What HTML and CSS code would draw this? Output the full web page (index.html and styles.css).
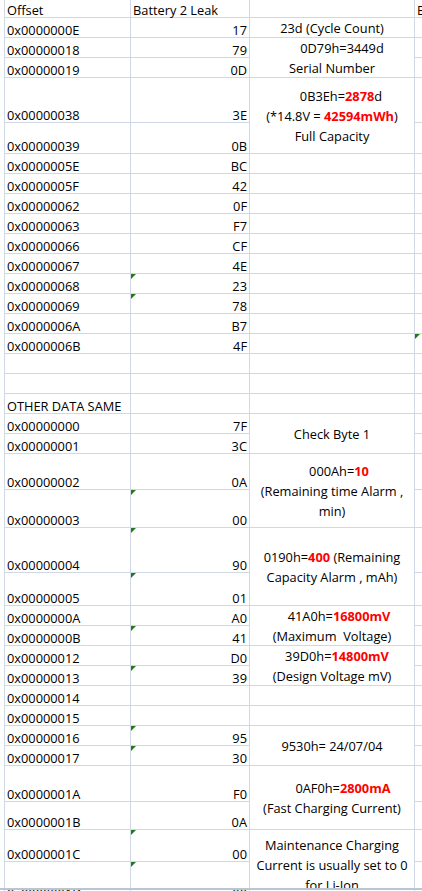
FILE: index.html
```html
<!DOCTYPE html>
<html>
<head>
<meta charset="utf-8">
<link rel="stylesheet" href="styles.css">
</head>
<body>
<div class="sheet">
  <div class="c a">Offset</div><div class="c a">Battery 2 Leak</div><div class="c m"></div><div class="c d">Battery 1</div>

  <div class="c a">0x0000000E</div><div class="c b">17</div><div class="c m"><div>23d (Cycle Count)</div></div><div class="c d"></div>
  <div class="c a">0x00000018</div><div class="c b">79</div><div class="c m s2"><div class="p20">0D79h=3449d</div><div>Serial Number</div></div><div class="c d"></div>
  <div class="c a">0x00000019</div><div class="c b">0D</div><div class="c d"></div>
  <div class="c a">0x00000038</div><div class="c b">3E</div><div class="c m s2"><div class="p18">0B3Eh=<b>2878</b>d</div><div>(*14.8V = <b>42594mWh</b>)</div><div>Full Capacity</div></div><div class="c d"></div>
  <div class="c a">0x00000039</div><div class="c b">0B</div><div class="c d"></div>

  <div class="c a">0x0000005E</div><div class="c b">BC</div><div class="c m"></div><div class="c d"></div>
  <div class="c a">0x0000005F</div><div class="c b">42</div><div class="c m"></div><div class="c d"></div>
  <div class="c a">0x00000062</div><div class="c b">0F</div><div class="c m"></div><div class="c d"></div>
  <div class="c a">0x00000063</div><div class="c b">F7</div><div class="c m"></div><div class="c d"></div>
  <div class="c a">0x00000066</div><div class="c b">CF</div><div class="c m"></div><div class="c d"></div>
  <div class="c a">0x00000067</div><div class="c b">4E</div><div class="c m"></div><div class="c d"></div>
  <div class="c a">0x00000068</div><div class="c b g">23</div><div class="c m"></div><div class="c d"></div>
  <div class="c a">0x00000069</div><div class="c b g">78</div><div class="c m"></div><div class="c d"></div>
  <div class="c a">0x0000006A</div><div class="c b">B7</div><div class="c m"></div><div class="c d"></div>
  <div class="c a">0x0000006B</div><div class="c b">4F</div><div class="c m"></div><div class="c d g"></div>

  <div class="c a"></div><div class="c b"></div><div class="c m"></div><div class="c d"></div>
  <div class="c a"></div><div class="c b"></div><div class="c m"></div><div class="c d"></div>
  <div class="c a">OTHER DATA SAME</div><div class="c b"></div><div class="c m"></div><div class="c d"></div>

  <div class="c a">0x00000000</div><div class="c b">7F</div><div class="c m s2"><div>Check Byte 1</div></div><div class="c d"></div>
  <div class="c a">0x00000001</div><div class="c b">3C</div><div class="c d"></div>
  <div class="c a">0x00000002</div><div class="c b">0A</div><div class="c m s2"><div class="p14">000Ah=<b>10</b></div><div>(Remaining time Alarm ,</div><div>min)</div></div><div class="c d"></div>
  <div class="c a">0x00000003</div><div class="c b g">00</div><div class="c d"></div>
  <div class="c a">0x00000004</div><div class="c b g">90</div><div class="c m s2"><div>0190h=<b>400</b> (Remaining</div><div>Capacity Alarm , mAh)</div></div><div class="c d"></div>
  <div class="c a">0x00000005</div><div class="c b g">01</div><div class="c d"></div>
  <div class="c a">0x0000000A</div><div class="c b">A0</div><div class="c m s2"><div class="p14">41A0h=<b>16800mV</b></div><div>(Maximum&nbsp; Voltage)</div></div><div class="c d"></div>
  <div class="c a">0x0000000B</div><div class="c b g">41</div><div class="c d"></div>
  <div class="c a">0x00000012</div><div class="c b">D0</div><div class="c m s2"><div class="p10">39D0h=<b>14800mV</b></div><div>(Design Voltage mV)</div></div><div class="c d"></div>
  <div class="c a">0x00000013</div><div class="c b g">39</div><div class="c d"></div>
  <div class="c a">0x00000014</div><div class="c b"></div><div class="c m"></div><div class="c d"></div>
  <div class="c a">0x00000015</div><div class="c b"></div><div class="c m"></div><div class="c d"></div>
  <div class="c a">0x00000016</div><div class="c b g">95</div><div class="c m s2"><div>9530h= 24/07/04</div></div><div class="c d"></div>
  <div class="c a">0x00000017</div><div class="c b g">30</div><div class="c d"></div>
  <div class="c a">0x0000001A</div><div class="c b">F0</div><div class="c m s2"><div class="p22">0AF0h=<b>2800mA</b></div><div>(Fast Charging Current)</div></div><div class="c d"></div>
  <div class="c a">0x0000001B</div><div class="c b">0A</div><div class="c d"></div>
  <div class="c a">0x0000001C</div><div class="c b g">00</div><div class="c m s2"><div>Maintenance Charging</div><div>Current is usually set to 0</div><div>for Li-Ion</div></div><div class="c d"></div>
  <div class="c a">0x0000001D</div><div class="c b g">00</div><div class="c d"></div>
</div>
<div class="frame-bottom"></div>
</body>
</html>
```

FILE: styles.css
```css
html, body {
  margin: 0;
  padding: 0;
  background: #ffffff;
  overflow: hidden;
}

body {
  width: 422px;
  height: 891px;
  font-family: "Open Sans", Lato, sans-serif;
  font-size: 12.8px;
  color: #000000;
}

.sheet {
  display: grid;
  width: max-content;
  margin-left: 4px;
  padding-left: 1px;
  background: #d0d7e5;
  gap: 1px;
  grid-template-columns: 125px 118px 164px 40px;
  grid-template-rows:
    17px 19px 19px 19px 44px 30px
    repeat(10, 19px)
    repeat(5, 19px)
    35px 37px 44px 32px
    repeat(6, 19px)
    19px 19px 35px 27px 31px 38px;
}

.c {
  background: #ffffff;
  position: relative;
  white-space: nowrap;
  display: flex;
  line-height: 14px;
}

.a {
  align-items: flex-end;
  padding-left: 2px;
}

.b {
  align-items: flex-end;
  justify-content: flex-end;
  padding-right: 2px;
}

.d {
  align-items: flex-end;
  padding-left: 2px;
  overflow: hidden;
}

.m {
  flex-direction: column;
  justify-content: center;
  align-items: center;
  line-height: 20px;
}

.m > div {
  text-align: center;
}

.s2 {
  grid-row: span 2;
}

.m b {
  color: #ff0000;
  font-weight: 700;
}

.p10 { padding-left: 10px; }
.p14 { padding-left: 14px; }
.p18 { padding-left: 18px; }
.p20 { padding-left: 20px; }
.p22 { padding-left: 22px; }

.g::before {
  content: "";
  position: absolute;
  left: 0;
  top: 0;
  width: 0;
  height: 0;
  border-top: 5px solid #1f7a1f;
  border-right: 5px solid transparent;
}

.frame-bottom {
  position: fixed;
  left: 0;
  top: 888px;
  width: 422px;
  height: 2px;
  background: #bcc4d3;
}
```
